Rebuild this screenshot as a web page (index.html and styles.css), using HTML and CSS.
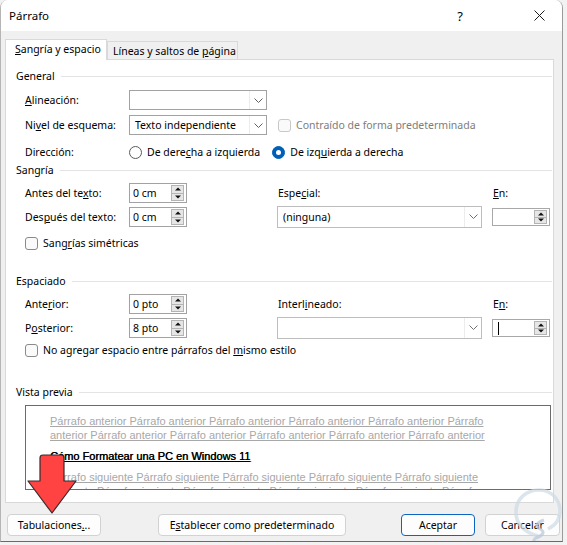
FILE: index.html
```html
<!DOCTYPE html>
<html lang="es">
<head>
<meta charset="utf-8">
<title>Párrafo</title>
<link rel="stylesheet" href="styles.css">
</head>
<body>
<div class="win">
  <div class="titlebar">
    <span class="title">Párrafo</span>
    <span class="help">?</span>
    <span class="close"><svg width="11" height="11" viewBox="0 0 11 11"><path d="M0.5 0.5L10.5 10.5M10.5 0.5L0.5 10.5" stroke="#1a1a1a" stroke-width="1" fill="none"/></svg></span>
  </div>
  <div class="content">
    <div class="tabs">
      <div class="tab active"><span><u>S</u>angría y espacio</span></div>
      <div class="tab"><span>Líneas y saltos de <u>p</u>ágina</span></div>
    </div>
    <div class="panel">
      <div class="gh">General</div>
      <div class="row r1">
        <span class="lbl"><u>A</u>lineación:</span>
        <div class="sel w138"><span></span><span class="arr"><svg width="9" height="5" viewBox="0 0 9 5"><path d="M0.5 0.5L4.5 4.5L8.5 0.5" stroke="#606060" fill="none"/></svg></span></div>
      </div>
      <div class="row r2">
        <span class="lbl">Ni<u>v</u>el de esquema:</span>
        <div class="sel w138"><span>Texto independiente</span><span class="arr"><svg width="9" height="5" viewBox="0 0 9 5"><path d="M0.5 0.5L4.5 4.5L8.5 0.5" stroke="#606060" fill="none"/></svg></span></div>
        <span class="chk dis ml11"></span><span class="ctext gray">Contraído de forma predeterminada</span>
      </div>
      <div class="row r3">
        <span class="lbl">Dirección:</span>
        <span class="radio"></span><span class="rtext">De dere<u>c</u>ha a izquierda</span>
        <span class="radio on ml-sel"></span><span class="rtext">De izq<u>u</u>ierda a derecha</span>
      </div>

      <div class="gh">Sangría</div>
      <div class="grid g1">
        <span class="lbl">Antes del te<u>x</u>to:</span>
        <div class="spin"><span>0 cm</span><span class="arrows"><i class="up"></i><i class="dn"></i></span></div>
        <span></span>
        <span class="rl">Espe<u>c</u>ial:</span>
        <span></span>
        <span class="rl"><u>E</u>n:</span>

        <span class="lbl">Des<u>p</u>ués del texto:</span>
        <div class="spin"><span>0 cm</span><span class="arrows"><i class="up"></i><i class="dn"></i></span></div>
        <span></span>
        <div class="sel light tall"><span>(ninguna)</span><span class="arr"><svg width="9" height="5" viewBox="0 0 9 5"><path d="M0.5 0.5L4.5 4.5L8.5 0.5" stroke="#707070" fill="none"/></svg></span></div>
        <span></span>
        <div class="spin small"><span></span><span class="arrows"><i class="up"></i><i class="dn"></i></span></div>
      </div>
      <div class="row r4">
        <span class="chk"></span><span class="ctext">Sang<u>r</u>ías simétricas</span>
      </div>

      <div class="gh g-esp">Espaciado</div>
      <div class="grid g1">
        <span class="lbl">Ante<u>r</u>ior:</span>
        <div class="spin"><span>0 pto</span><span class="arrows"><i class="up"></i><i class="dn"></i></span></div>
        <span></span>
        <span class="rl">Interl<u>i</u>neado:</span>
        <span></span>
        <span class="rl">E<u>n</u>:</span>

        <span class="lbl">P<u>o</u>sterior:</span>
        <div class="spin"><span>8 pto</span><span class="arrows"><i class="up"></i><i class="dn"></i></span></div>
        <span></span>
        <div class="sel light tall"><span></span><span class="arr"><svg width="9" height="5" viewBox="0 0 9 5"><path d="M0.5 0.5L4.5 4.5L8.5 0.5" stroke="#707070" fill="none"/></svg></span></div>
        <span></span>
        <div class="spin small"><span class="caret"></span><span class="arrows"><i class="up"></i><i class="dn"></i></span></div>
      </div>
      <div class="row r5">
        <span class="chk"></span><span class="ctext">No agregar espacio entre párrafos del <u>m</u>ismo estilo</span>
      </div>

      <div class="gh g-vp">Vista previa</div>
      <div class="preview">
        <div class="pl g">Párrafo anterior Párrafo anterior Párrafo anterior Párrafo anterior Párrafo anterior Párrafo</div>
        <div class="pl g">anterior Párrafo anterior Párrafo anterior Párrafo anterior Párrafo anterior Párrafo anterior</div>
        <div class="pl cur">Cómo Formatear una PC en Windows 11</div>
        <div class="pl g">Párrafo siguiente Párrafo siguiente Párrafo siguiente Párrafo siguiente Párrafo siguiente</div>
        <div class="pl g">siguiente Párrafo siguiente Párrafo siguiente Párrafo siguiente Párrafo siguiente Párrafo</div>
      </div>
    </div>
    <div class="buttons">
      <button class="btn b-tab">Tabulaciones<u>.</u>..</button>
      <button class="btn b-def">E<u>s</u>tablecer como predeterminado</button>
      <button class="btn b-ok">Aceptar</button>
      <button class="btn b-cancel">Cancelar</button>
    </div>
  </div>

  <svg class="arrow" width="54" height="66" viewBox="0 0 54 66">
    <path d="M17 3 H35 Q38 3 38 6 V29 H50 L26 61 L2 29 H14 V6 Q14 3 17 3 Z" fill="#ff4343" stroke="#3a2a2a" stroke-width="1.2" stroke-linejoin="round"/>
  </svg>

  <svg class="logo" width="72" height="76" viewBox="0 0 72 76">
    <path d="M44 68 C30 64 22 56 22 44 C22 31 32 22 45 22 C58 22 66 32 66 43 C66 52 60 58 54 61" fill="none" stroke="#cdd8e4" stroke-width="3.5" opacity="0.7"/>
    <path d="M50 52 C44 54 40 58 46 61 C52 64 48 68 42 70 C38 72 40 75 46 74" fill="none" stroke="#bccad9" stroke-width="3" opacity="0.75"/>
  </svg>
</div>
</body>
</html>
```

FILE: styles.css
```css
html, body {
  margin: 0;
  padding: 0;
  background: #f2f2f2;
}

.win {
  position: relative;
  width: 563px;
  height: 542px;
  box-sizing: border-box;
  background: #f0f0f0;
  border-right: 1px solid #9a9a9a;
  border-bottom: 1px solid #6a6a6a;
  border-left: 1px solid #b5b5b5;
  border-radius: 8px 8px 0 0;
  overflow: hidden;
  font-family: "Noto Sans", "Open Sans", sans-serif;
  font-size: 10.5px;
  color: #000;
}

.titlebar {
  height: 31px;
  background: #fff;
  display: flex;
  align-items: center;
  padding-left: 8px;
}
.title {
  flex: 1;
  font-size: 11.5px;
}
.help {
  width: 46px;
  text-align: center;
  font-size: 13px;
  margin-right: 34px;
}
.close {
  width: 45px;
  display: flex;
  justify-content: center;
}

.content {
  padding: 8px 0 0 4px;
}

.tabs {
  display: flex;
  align-items: flex-end;
  height: 20px;
}
.tab {
  box-sizing: border-box;
  height: 18px;
  border: 1px solid #d9d9d9;
  border-bottom: none;
  display: flex;
  align-items: center;
  padding-left: 5px;
  width: 131px;
  background: #f0f0f0;
  white-space: nowrap;
}
.tab.active {
  width: 102px;
  height: 21px;
  padding-left: 9px;
  background: #fff;
  margin-bottom: -1px;
  position: relative;
  z-index: 1;
  padding-bottom: 2px;
}

.panel {
  box-sizing: border-box;
  width: 549px;
  height: 444px;
  background: #fff;
  border: 1px solid #d9d9d9;
  padding: 8px 1px 0 10px;
}

.gh {
  display: flex;
  align-items: center;
  height: 16px;
}
.gh::after {
  content: "";
  flex: 1;
  height: 1px;
  background: #e3e3e3;
  margin-left: 6px;
}
.g-esp { margin-top: 20px; }
.g-vp { margin-top: 24px; }

.row {
  display: flex;
  align-items: center;
  height: 20px;
  margin-left: 9px;
}
.r1 { margin-top: 6px; }
.r2 { margin-top: 5px; }
.r3 { margin-top: 7px; }
.r4 { margin-top: 6px; }
.r5 { margin-top: 2px; }

.lbl {
  width: 104px;
  flex: none;
}

.grid {
  display: grid;
  grid-template-columns: 104px 58px 90px 205px 10px 58px;
  grid-template-rows: 20px 20px;
  row-gap: 4px;
  align-items: center;
  margin-left: 9px;
  margin-top: 5px;
}
.rl {
  padding-left: 1px;
}

.sel {
  box-sizing: border-box;
  height: 20px;
  border: 1px solid #a2a2a2;
  display: flex;
  align-items: center;
  padding-left: 5px;
  background: #fff;
}
.w138 { width: 138px; }
.sel.light {
  border-color: #bdbdbd;
  width: 205px;
}
.sel.tall {
  height: 22px;
  margin-top: -1px;
}
.arr {
  margin-left: auto;
  width: 17px;
  height: 100%;
  box-sizing: border-box;
  border-left: 1px solid #ececec;
  display: flex;
  align-items: center;
  justify-content: center;
}

.spin {
  box-sizing: border-box;
  width: 58px;
  height: 20px;
  border: 1px solid #a2a2a2;
  display: flex;
  align-items: center;
  padding-left: 3px;
  background: #fff;
}
.spin.small {
  height: 18px;
  border-color: #a8a8a8;
}
.arrows {
  margin-left: auto;
  margin-right: 2px;
  width: 13px;
  height: 16px;
  display: flex;
  flex-direction: column;
}
.spin.small .arrows { height: 14px; }
.arrows i {
  flex: 1;
  position: relative;
  background: #e6e6e6;
  border: 1px solid #b4b4b4;
}
.arrows i.dn { border-top: none; }
.arrows i::after {
  content: "";
  position: absolute;
  left: 50%;
  top: 50%;
  transform: translate(-50%, -50%);
  border-left: 3px solid transparent;
  border-right: 3px solid transparent;
}
.arrows i.up::after { border-bottom: 3px solid #111; }
.arrows i.dn::after { border-top: 3px solid #111; }
.caret {
  width: 1px;
  height: 13px;
  background: #000;
  margin-left: 2px;
}

.chk {
  box-sizing: border-box;
  width: 13px;
  height: 13px;
  border: 1px solid #8a8a8a;
  border-radius: 3px;
  background: #fafafa;
  flex: none;
}
.chk.dis { border-color: #c8c8c8; }
.ml11 { margin-left: 11px; }
.ctext { margin-left: 5px; }
.gray { color: #7d7d7d; }

.radio {
  box-sizing: border-box;
  width: 13px;
  height: 13px;
  border: 1px solid #5a5a5a;
  border-radius: 50%;
  flex: none;
  position: relative;
}
.radio.on {
  background: #005fb8;
  border-color: #005fb8;
}
.radio.on::after {
  content: "";
  position: absolute;
  left: 3px;
  top: 3px;
  width: 5px;
  height: 5px;
  border-radius: 50%;
  background: #fff;
}
.rtext { margin-left: 5px; }
.ml-sel { margin-left: 12px; }

.preview {
  box-sizing: border-box;
  margin: 5px 0 0 9px;
  width: 526px;
  height: 85px;
  border: 1px solid #6b6b6b;
  padding: 8px 0 0 24px;
  overflow: hidden;
  font-family: "Liberation Sans", Arial, sans-serif;
  font-size: 11px;
  line-height: 14px;
}
.pl {
  white-space: nowrap;
  text-decoration: underline;
}
.pl.g { color: #a8a8a8; }
.pl.cur {
  color: #000;
  margin: 7px 0;
  text-shadow: 0.4px 0 0 #000;
}

.buttons {
  display: flex;
  margin-top: 11px;
  height: 22px;
}
.btn {
  box-sizing: border-box;
  height: 22px;
  padding: 0;
  font-family: inherit;
  font-size: 10.5px;
  color: #000;
  background: #fdfdfd;
  border: 1px solid #d2d2d2;
  border-radius: 4px;
}
.b-tab { width: 94px; margin-left: 2px; }
.b-def { width: 188px; margin-left: 57px; }
.b-ok { width: 74px; margin-left: 55px; border-color: #0a64c0; }
.b-cancel { width: 75px; margin-left: 10px; }

.arrow {
  position: absolute;
  left: 25px;
  top: 452px;
}
.logo {
  position: absolute;
  left: 493px;
  top: 468px;
}
```
